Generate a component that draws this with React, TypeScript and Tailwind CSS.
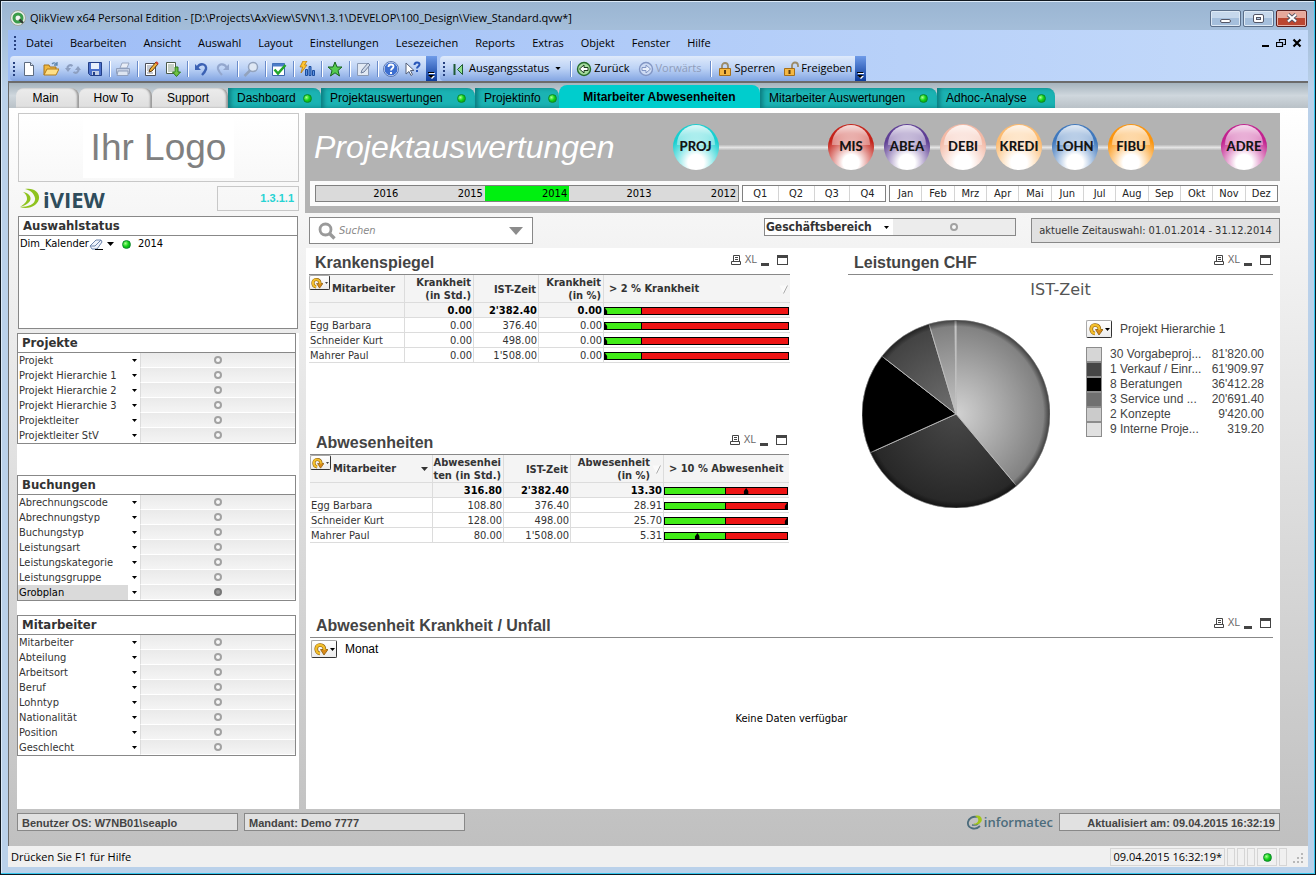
import React from 'react';
import clsx from 'clsx';

const segoe = "font-[family-name:'Open_Sans','Noto_Sans',sans-serif]";
const tahoma = "font-[family-name:'DejaVu_Sans_Condensed','DejaVu_Sans',sans-serif]";
const verdana = "font-[family-name:'DejaVu_Sans',Verdana,sans-serif]";
const arial = "font-[family-name:'Liberation_Sans',Arial,sans-serif]";
const lato = "font-[family-name:Lato,sans-serif]";

const menus = [
  'Datei', 'Bearbeiten', 'Ansicht', 'Auswahl', 'Layout', 'Einstellungen',
  'Lesezeichen', 'Reports', 'Extras', 'Objekt', 'Fenster', 'Hilfe',
];

const tabs = [
  { label: 'Main', size: 'w-[63px]', kind: 'plain' },
  { label: 'How To', size: 'w-[73px]', kind: 'plain' },
  { label: 'Support', size: 'w-[76px]', kind: 'plain' },
  { label: 'Dashboard', size: 'w-[93px] px-[9px]', kind: 'teal' },
  { label: 'Projektauswertungen', size: 'w-[154px] px-[9px]', kind: 'teal' },
  { label: 'Projektinfo', size: 'w-[84px] pr-[2px] pl-[9px]', kind: 'teal' },
  { label: 'Mitarbeiter Abwesenheiten', size: 'w-[201px]', kind: 'active' },
  { label: 'Mitarbeiter Auswertungen', size: 'w-[177px] px-[9px]', kind: 'teal' },
  { label: 'Adhoc-Analyse', size: 'w-[118px] px-[9px]', kind: 'teal' },
];

const filterBoxes = [
  {
    title: 'Projekte',
    space: 'mb-[31px]',
    fields: ['Projekt', 'Projekt Hierarchie 1', 'Projekt Hierarchie 2', 'Projekt Hierarchie 3', 'Projektleiter', 'Projektleiter StV'],
  },
  {
    title: 'Buchungen',
    space: 'mb-[14px]',
    fields: ['Abrechnungscode', 'Abrechnungstyp', 'Buchungstyp', 'Leistungsart', 'Leistungskategorie', 'Leistungsgruppe', 'Grobplan'],
  },
  {
    title: 'Mitarbeiter',
    space: '',
    fields: ['Mitarbeiter', 'Abteilung', 'Arbeitsort', 'Beruf', 'Lohntyp', 'Nationalität', 'Position', 'Geschlecht'],
  },
];

const years = ['2016', '2015', '2014', '2013', '2012'];
const quarters = ['Q1', 'Q2', 'Q3', 'Q4'];
const months = ['Jan', 'Feb', 'Mrz', 'Apr', 'Mai', 'Jun', 'Jul', 'Aug', 'Sep', 'Okt', 'Nov', 'Dez'];

const modules = [
  { label: 'PROJ', color: '#18cfd0', line: 'flex-1' },
  { label: 'MIS', color: '#c4231a', line: 'w-[10px]' },
  { label: 'ABEA', color: '#5f3f95', line: 'w-[10px]' },
  { label: 'DEBI', color: '#f3b9a6', line: 'w-[10px]' },
  { label: 'KREDI', color: '#fcbb70', line: 'w-[10px]' },
  { label: 'LOHN', color: '#3f78bd', line: 'w-[10px]' },
  { label: 'FIBU', color: '#fb950f', line: 'w-[67px]' },
  { label: 'ADRE', color: '#c2228f', line: '' },
];

type Row = { name: string; hours: string; actual: string; percent: string; value: number };

const sickRows: Row[] = [
  { name: '', hours: '0.00', actual: "2'382.40", percent: '0.00', value: 0 },
  { name: 'Egg Barbara', hours: '0.00', actual: '376.40', percent: '0.00', value: 0 },
  { name: 'Schneider Kurt', hours: '0.00', actual: '498.00', percent: '0.00', value: 0 },
  { name: 'Mahrer Paul', hours: '0.00', actual: "1'508.00", percent: '0.00', value: 0 },
];

const absenceRows: Row[] = [
  { name: '', hours: '316.80', actual: "2'382.40", percent: '13.30', value: 13.3 },
  { name: 'Egg Barbara', hours: '108.80', actual: '376.40', percent: '28.91', value: 28.91 },
  { name: 'Schneider Kurt', hours: '128.00', actual: '498.00', percent: '25.70', value: 25.7 },
  { name: 'Mahrer Paul', hours: '80.00', actual: "1'508.00", percent: '5.31', value: 5.31 },
];

const services = [
  { label: '30 Vorgabeproj...', text: "81'820.00", value: 81820, swatch: '#d6d6d6', from: '#d2d2d2', to: '#7c7c7c' },
  { label: '1 Verkauf / Einr...', text: "61'909.97", value: 61909.97, swatch: '#464646', from: '#484848', to: '#262626' },
  { label: '8 Beratungen', text: "36'412.28", value: 36412.28, swatch: '#000000', from: '#000000', to: '#000000' },
  { label: '3 Service und ...', text: "20'691.40", value: 20691.4, swatch: '#707070', from: '#707070', to: '#404040' },
  { label: '2 Konzepte', text: "9'420.00", value: 9420, swatch: '#cbcbcb', from: '#c4c4c4', to: '#7a7a7a' },
  { label: '9 Interne Proje...', text: '319.20', value: 319.2, swatch: '#e0e0e0', from: '#e8e8e8', to: '#dddddd' },
];

function Led({ className }: { className?: string }) {
  return (
    <span
      className={clsx(
        'inline-block size-[9px] shrink-0 rounded-full border border-[#0a8a2a] bg-[radial-gradient(circle_at_35%_35%,#a8ff90,#16d51c_45%,#068a10)]',
        className,
      )}
    />
  );
}

function Caret({ className }: { className?: string }) {
  return (
    <svg viewBox="0 0 7 4" className={clsx('shrink-0', className ?? 'h-[3px] w-[5px]')} aria-hidden="true">
      <path d="M0 0h7L3.5 4z" fill="currentColor" />
    </svg>
  );
}

function Ring({ filled }: { filled?: boolean }) {
  return (
    <span
      className={clsx(
        'size-2 rounded-full border-2',
        filled ? 'border-[#777] bg-[#9a9a9a]' : 'border-[#a2a2a2] bg-[#f8f8f8]',
      )}
    />
  );
}

function ToolIcon({ children }: { children: React.ReactNode }) {
  return (
    <svg viewBox="0 0 16 16" className="size-4 shrink-0" aria-hidden="true">
      {children}
    </svg>
  );
}

function ToolButton({ label, children }: { label: string; children: React.ReactNode }) {
  return (
    <button type="button" aria-label={label} className="flex w-[22px] items-center justify-center">
      <ToolIcon>{children}</ToolIcon>
    </button>
  );
}

function Separator() {
  return (
    <span className="flex w-[6px] justify-center">
      <span className="h-4 w-px bg-[#6a8ccb] shadow-[1px_0_0_#fff]" />
    </span>
  );
}

function Grip() {
  return (
    <span className="mx-[3px] flex flex-col gap-[2px]">
      <span className="size-[2px] bg-[#27417f]" />
      <span className="size-[2px] bg-[#27417f]" />
      <span className="size-[2px] bg-[#27417f]" />
      <span className="size-[2px] bg-[#27417f]" />
    </span>
  );
}

function ToolbarEnd() {
  return (
    <button
      type="button"
      aria-label="Symbolleistenoptionen"
      className="ml-auto flex w-[11px] items-end justify-center self-stretch bg-linear-to-b from-[#6f9be8] to-[#0b3a9c] pb-[2px]"
    >
      <svg viewBox="0 0 7 7" className="size-[7px]" aria-hidden="true">
        <path d="M1 1h6v1H1zM1 4h6l-3 3z" fill="#fff" />
        <path d="M0 0h6v1H0zM0 3h6L3 6z" fill="#000" />
      </svg>
    </button>
  );
}

function TitleBar() {
  return (
    <header className={clsx('flex h-7 items-center pt-1 pl-[2px]', segoe)}>
      <svg viewBox="0 0 16 16" className="size-4" aria-hidden="true">
        <circle cx="8" cy="8" r="7.5" fill="#e9eee9" stroke="#9fa8a0" />
        <circle cx="8" cy="8" r="4" fill="none" stroke="#3a9c49" strokeWidth="3" />
        <path d="M8 8l5 5" stroke="#2d3b33" strokeWidth="2.4" />
        <circle cx="8" cy="8" r="2" fill="#f3f7f3" />
      </svg>
      <h1 className="ml-[4px] text-[11px] text-black">
        QlikView x64 Personal Edition - [D:\Projects\AxView\SVN\1.3.1\DEVELOP\100_Design\View_Standard.qvw*]
      </h1>
      <div className="ml-auto flex gap-[2px] pr-px">
        <button type="button" aria-label="Minimieren" className="flex h-[17px] w-[31px] items-center justify-center rounded-xs border border-[#5b6f8a] bg-linear-to-b from-[#c6d8ec] from-50% to-[#a5bfdc] to-50% shadow-[inset_0_0_0_1px_#dde9f5]">
          <span className="mt-[5px] h-[4px] w-[11px] rounded-xs border border-[#535666] bg-white" />
        </button>
        <button type="button" aria-label="Maximieren" className="flex h-[17px] w-[31px] items-center justify-center rounded-xs border border-[#5b6f8a] bg-linear-to-b from-[#c6d8ec] from-50% to-[#a5bfdc] to-50% shadow-[inset_0_0_0_1px_#dde9f5]">
          <span className="flex h-[9px] w-[11px] items-center justify-center rounded-xs border border-[#535666] bg-white">
            <span className="h-[3px] w-[5px] border border-[#535666] bg-[#b4cbe4]" />
          </span>
        </button>
        <button type="button" aria-label="Schliessen" className="flex h-[17px] w-[31px] items-center justify-center rounded-xs border border-[#5a1f1f] bg-linear-to-b from-[#e6a89b] from-50% to-[#bb4630] to-50% shadow-[inset_0_0_0_1px_#e8b3a8]">
          <svg viewBox="0 0 12 10" className="h-[10px] w-3" aria-hidden="true">
            <path d="M2 1.5l8 7M10 1.5l-8 7" stroke="#535666" strokeWidth="4" />
            <path d="M2 1.5l8 7M10 1.5l-8 7" stroke="#fff" strokeWidth="2.2" />
          </svg>
        </button>
      </div>
    </header>
  );
}

function MenuBar() {
  return (
    <nav className={clsx('flex h-[26px] items-center pl-[3px] text-[11px] text-black', segoe)}>
      <Grip />
      <div className="ml-[7px] flex gap-[17px]">
        {menus.map((menu) => (
          <button type="button" key={menu}>{menu}</button>
        ))}
      </div>
      <div className="ml-auto flex items-center gap-[6px] pr-[6px]">
        <button type="button" aria-label="Fenster minimieren">
          <svg viewBox="0 0 10 10" className="size-[10px]" aria-hidden="true"><path d="M2 7h7v2H2z" /></svg>
        </button>
        <button type="button" aria-label="Fenster wiederherstellen">
          <svg viewBox="0 0 10 10" className="size-[10px]" aria-hidden="true">
            <path d="M3.5 3.5v-2h6v5h-2M.5 4.5h6v4h-6zM3 1.5h7M0 4.5h7" fill="none" stroke="#000" strokeWidth="1.2" />
          </svg>
        </button>
        <button type="button" aria-label="Fenster schliessen">
          <svg viewBox="0 0 10 10" className="size-[10px]" aria-hidden="true"><path d="M1.5 1.5l7 7M8.5 1.5l-7 7" stroke="#000" strokeWidth="2.2" /></svg>
        </button>
      </div>
    </nav>
  );
}

function Toolbars() {
  return (
    <div className={clsx('flex h-[25px] gap-[3px] pl-[2px] text-[11px] text-black', segoe)}>
      <div className="flex w-[427px] items-center rounded-l-sm bg-linear-to-b from-[#dfeafb] via-[#bcd2f5] to-[#83a5e2]">
        <Grip />
        <ToolButton label="Neu">
          <path d="M3.5 1.5h6l3 3v10h-9z" fill="#fff" stroke="#5d6b80" />
          <path d="M9.5 1.5v3h3" fill="#d9e2ee" stroke="#5d6b80" />
        </ToolButton>
        <ToolButton label="Öffnen">
          <path d="M1 14V4h5l1 2h6v3" fill="#f0b840" stroke="#a8741a" />
          <path d="M1 14l3-6h12l-3 6z" fill="#ffdf86" stroke="#b27c1c" />
          <path d="M9 3c2-2 4-1 5 1m0-3v3h-3" fill="none" stroke="#5e86ad" strokeWidth="1.3" />
        </ToolButton>
        <ToolButton label="Neu laden">
          <path d="M2.500 8C2 5 5 3 7.500 5M13.500 8c.5 3-2.500 5-5 3" fill="none" stroke="#8d9fc0" strokeWidth="2.200" />
          <path d="M0 7h6L3 11zM10 9h6l-3-4z" fill="#8d9fc0" />
        </ToolButton>
        <ToolButton label="Speichern">
          <path d="M1.5 1.5h13v13h-11l-2-2z" fill="#4a6fc9" stroke="#233f87" />
          <path d="M4 2h8v6H4z" fill="#e9f0fc" />
          <path d="M5 10h7v4H5z" fill="#c3cfe6" />
          <path d="M6 11h2v3H6z" fill="#233f87" />
        </ToolButton>
        <Separator />
        <ToolButton label="Drucken">
          <path d="M5 7l2-5h7l-2 5z" fill="#e8edf6" stroke="#9aa8c2" />
          <path d="M1.5 7.5h13v5h-13z" fill="#c3cee2" stroke="#8f9fbd" />
          <path d="M3 10h10v4.5H2z" fill="#dde5f1" stroke="#8f9fbd" />
        </ToolButton>
        <Separator />
        <ToolButton label="Skript bearbeiten">
          <path d="M2.5 2.5h10v12h-10z" fill="#fff" stroke="#4b4f58" />
          <path d="M4 5h5M4 7h4M4 9h3M4 12h6" stroke="#8b95a8" />
          <path d="M6 11l1-3 6-7 2 2-6 7z" fill="#f1b23a" stroke="#5d3c12" />
          <path d="M13 1l2 2" stroke="#d04030" strokeWidth="2" />
        </ToolButton>
        <ToolButton label="Tabellen anzeigen">
          <path d="M1.5 1.5h9v11h-9z" fill="#fff" stroke="#4b5b4b" />
          <path d="M3 4h6M3 6h6M3 8h6M3 10h6" stroke="#8aa08a" />
          <path d="M10 6h3v5h2.5l-4 4.5L7.5 11H10z" fill="#6fc241" stroke="#2d7a1c" />
        </ToolButton>
        <Separator />
        <ToolButton label="Rückgängig">
          <path d="M4 7c3-6 10-4 9 1-1 3-2 4-4 6" fill="none" stroke="#3c62b4" strokeWidth="2.4" />
          <path d="M2 3v6h6z" fill="#3c62b4" />
        </ToolButton>
        <ToolButton label="Wiederholen">
          <path d="M12 7C9 1 2 3 3 8c1 3 2 4 4 6" fill="none" stroke="#93a7ce" strokeWidth="2.2" />
          <path d="M14 3v6H8z" fill="#93a7ce" />
        </ToolButton>
        <Separator />
        <ToolButton label="Suchen">
          <circle cx="10" cy="6" r="4.5" fill="#dfe8f4" stroke="#93a3bd" strokeWidth="1.5" />
          <path d="M7 9.5L1.500 15" stroke="#93a3bd" strokeWidth="2.5" />
        </ToolButton>
        <Separator />
        <ToolButton label="Aktuelle Auswahl">
          <path d="M1.5 2.5h12v12h-12z" fill="#fff" stroke="#3b66ad" />
          <path d="M1.5 2.5h12v3h-12z" fill="#4b7cc8" />
          <path d="M3.5 8.5l3.500 4L14.500 4" fill="none" stroke="#22a52a" strokeWidth="2.5" />
        </ToolButton>
        <Separator />
        <ToolButton label="Diagramm erstellen">
          <path d="M6.5 8.5h2v6h-2zM10 5.500h2v9h-2zM13.500 9.500h2v5h-2z" fill="#5b93e3" stroke="#1c4c9d" />
          <path d="M4 0h4L5.500 4H8l-6 8 1.500-6H1z" fill="#ffc52e" stroke="#b57810" strokeWidth=".8" />
        </ToolButton>
        <Separator />
        <ToolButton label="Lesezeichen hinzufügen">
          <path d="M8 1l2 5h5l-4 3.500 1.500 5.500L8 11.800 3.500 15 5 9.500 1 6h5z" fill="#55cc4f" stroke="#17641c" />
        </ToolButton>
        <Separator />
        <ToolButton label="Notizen">
          <path d="M2.500 2.500h11v12h-11z" fill="#e2e9f3" stroke="#8b9ab4" />
          <path d="M6 12l1-3 6-7 2 2-6 7z" fill="#cfd9e8" stroke="#6f7f9d" />
        </ToolButton>
        <Separator />
        <ToolButton label="Hilfe">
          <circle cx="8" cy="8" r="7" fill="#3d6fd0" stroke="#e6eefb" />
          <circle cx="8" cy="8" r="7.500" fill="none" stroke="#2d5098" strokeWidth=".7" />
          <path d="M5.500 6c0-3.500 5-3 5-.5 0 2-2.500 2-2.500 4" fill="none" stroke="#fff" strokeWidth="1.800" />
          <path d="M7 11h2v2H7z" fill="#fff" />
        </ToolButton>
        <ToolButton label="Direkthilfe">
          <path d="M1 2v11l3-2.500 2 4 1.500-1-2-4H9z" fill="#fff" stroke="#55617a" />
          <path d="M9.500 4c0-3.500 5-3 5-.5 0 2-2.500 2-2.500 4" fill="none" stroke="#2a57b8" strokeWidth="2" />
          <path d="M11 9h2v2h-2z" fill="#2a57b8" />
        </ToolButton>
        <ToolbarEnd />
      </div>
      <div className="flex w-[426px] items-center rounded-l-sm bg-linear-to-b from-[#dfeafb] via-[#bcd2f5] to-[#83a5e2]">
        <Grip />
        <button type="button" className="flex items-center gap-[2px] pl-[3px]">
          <ToolIcon>
            <path d="M3.500 3v11" stroke="#1f5a35" strokeWidth="2" />
            <path d="M6.500 8.500l5-5v10z" fill="#8ee08a" stroke="#1f5a35" />
          </ToolIcon>
          Ausgangsstatus
          <Caret className="ml-1 h-[3px] w-[6px]" />
        </button>
        <span className="w-[6px]" />
        <Separator />
        <button type="button" className="flex items-center gap-[2px] pl-[3px]">
          <ToolIcon>
            <circle cx="8" cy="8" r="6.500" fill="#a5dc9e" stroke="#256b2b" strokeWidth="1.400" />
            <path d="M3.500 8L8 4v2.500h4v3H8V12z" fill="#fff" stroke="#1d3c20" />
          </ToolIcon>
          Zurück
        </button>
        <button type="button" className="ml-2 flex items-center gap-[2px] text-[#8f9cba]">
          <ToolIcon>
            <circle cx="8" cy="8" r="6.500" fill="#cddbf4" stroke="#8296c4" strokeWidth="1.400" />
            <path d="M12.500 8L8 4v2.500H4v3h4V12z" fill="#e8effb" stroke="#8296c4" />
          </ToolIcon>
          Vorwärts
        </button>
        <span className="w-[6px]" />
        <Separator />
        <button type="button" className="flex items-center gap-[2px] pl-[3px]">
          <ToolIcon>
            <path d="M5 8V5a3 3 0 0 1 6 0v3" fill="none" stroke="#9b8c6a" strokeWidth="1.800" />
            <path d="M2.500 7.500h11v7h-11z" fill="#f5b843" stroke="#a6701a" />
            <path d="M7 9h2v4H7z" fill="#5e3c0d" />
          </ToolIcon>
          Sperren
        </button>
        <button type="button" className="ml-2 flex items-center gap-[2px]">
          <ToolIcon>
            <path d="M9 8V4.500a3 3 0 0 1 6 0V6" fill="none" stroke="#9b8c6a" strokeWidth="1.800" />
            <path d="M1.500 7.500h10v7h-10z" fill="#f5b843" stroke="#a6701a" />
            <path d="M5.500 9h2v4h-2z" fill="#5e3c0d" />
          </ToolIcon>
          Freigeben
        </button>
        <ToolbarEnd />
      </div>
    </div>
  );
}

function SheetTabs() {
  return (
    <div role="tablist" className={clsx('flex h-[25px] items-end bg-linear-to-b from-[#a5b3bd] via-[#cfd7dd] to-[#b9c1c7] pl-[7px] text-xs text-black', arial)}>
      {tabs.map((tab) => (
        <button
          type="button"
          role="tab"
          aria-selected={tab.kind === 'active'}
          key={tab.label}
          className={clsx(
            'flex items-center whitespace-nowrap',
            tab.size,
            tab.kind === 'plain' && 'h-5 justify-center rounded-t-lg bg-linear-to-b from-[#ececec] to-[#dedede] pr-1 shadow-[inset_-2px_0_2px_#9a9a9a]',
            tab.kind === 'teal' && 'h-5 justify-between rounded-tr-lg bg-[#1bb3b3] shadow-[inset_3px_0_4px_#0c7c80]',
            tab.kind === 'active' && 'h-[23px] justify-center rounded-t-lg bg-[#00cdcd] font-bold',
          )}
        >
          {tab.label}
          {tab.kind === 'teal' && <Led />}
        </button>
      ))}
    </div>
  );
}

function FilterBox({ title, fields, space }: { title: string; fields: string[]; space: string }) {
  return (
    <section className={clsx('mr-[3px] border border-[#888] bg-white', space)}>
      <h2 className="h-[19px] border-b border-[#888] pl-1 text-[13px] leading-[18px] font-bold text-[#333]">{title}</h2>
      {fields.map((field) => (
        <button type="button" key={field} aria-haspopup="listbox" className="flex h-[15px] w-full items-stretch text-left text-[11px] leading-4 text-[#333]">
          <span className={clsx('w-[110px] whitespace-nowrap pl-px', field === 'Grobplan' && 'bg-[#dadada] text-black')}>{field}</span>
          <span className="flex w-[12px] items-center justify-center text-black"><Caret /></span>
          <span className="flex flex-1 items-center justify-center border-b border-l border-b-white border-l-[#dcdcdc] bg-linear-to-b from-[#eaeaea] to-[#f4f4f4]">
            <Ring filled={field === 'Grobplan'} />
          </span>
        </button>
      ))}
    </section>
  );
}

function Sidebar() {
  return (
    <aside className={clsx('flex w-[282px] shrink-0 flex-col', tahoma)}>
      <div className="ml-px flex h-[69px] items-center justify-center border border-[#c8c8c8] bg-linear-to-b from-white to-[#f8f8f8]">
        <span className={clsx('bg-white px-2 text-[37px] leading-[60px] text-[#808080]', arial)}>Ihr Logo</span>
      </div>
      <div className="mt-1 flex h-[25px] items-center justify-between">
        <div className="flex items-center gap-[2px] pl-[2px]">
          <svg viewBox="0 0 22 22" className="size-[22px]" aria-hidden="true">
            <path d="M6 1c14-2 18 10 10 16-4 3-10 4-15 2 9 0 16-3 15-9-1-5-5-8-10-9z" fill="#8fc31f" />
            <path d="M4 4c6 1 9 5 7 9-2 3-6 5-10 6 4-3 7-5 7-8S7 6 4 4z" fill="#8fc31f" />
          </svg>
          <span className={clsx('text-[22px] leading-6 font-bold text-[#2f4d5c]', segoe)}>iVIEW</span>
        </div>
        <div className={clsx('h-[25px] w-[82px] border border-[#c8c8c8] pr-1 text-right text-[11px] leading-[23px] font-bold text-[#26d3d3]', arial)}>1.3.1.1</div>
      </div>
      <section className="mt-[5px] mr-px ml-px h-[113px] border border-[#888] bg-white">
        <h2 className="h-[19px] border-b border-[#888] pl-1 text-[13px] leading-[18px] font-bold text-[#333]">Auswahlstatus</h2>
        <div className="flex h-4 items-center pl-px text-[11px] text-black">
          Dim_Kalender
          <svg viewBox="0 0 14 12" className="h-3 w-[14px]" aria-hidden="true">
            <path d="M1 8l6-6h5l1 2-5 7H3z" fill="#eef2fa" stroke="#6f86ad" />
            <path d="M1 8h5l6-6" fill="none" stroke="#6f86ad" />
            <path d="M6 11.500h8" stroke="#000" />
          </svg>
          <Caret className="ml-1 h-1 w-[7px]" />
          <Led className="mr-[7px] ml-2" />
          2014
        </div>
      </section>
      <div className="mt-1 flex-1 bg-white">
        {filterBoxes.map((box) => (
          <FilterBox key={box.title} {...box} />
        ))}
      </div>
    </aside>
  );
}

function ModuleNav() {
  return (
    <nav className="ml-[58px] flex flex-1 items-center">
      {modules.map((module) => (
        <React.Fragment key={module.label}>
          <button
            type="button"
            className={clsx('relative size-[46px] shrink-0 overflow-hidden rounded-full text-[13px] font-black text-[#151515]', lato)}
            style={{ background: `radial-gradient(circle at 50% 84%, #fff 18%, ${module.color} 66%)` }}
          >
            <span className="absolute inset-x-[4px] top-[1px] h-5 rounded-t-full bg-linear-to-b from-white/85 to-white/35" />
            <span className="relative flex justify-center">{module.label}</span>
          </button>
          {module.line && <span className={clsx('h-[5px] bg-linear-to-b from-[#bdbdbd] via-[#e4e4e4] to-[#bdbdbd]', module.line)} />}
        </React.Fragment>
      ))}
    </nav>
  );
}

function PeriodBar() {
  return (
    <div className="ml-[5px] flex h-[25px] items-center gap-[3px] bg-[#fbfbfb] pr-[2px] pl-[5px] text-[11px] leading-[15px] text-[#222]">
      <div className="flex h-[17px] w-[424px] border border-[#808080] bg-[#dadada] text-black">
        {years.map((year) => (
          <button type="button" key={year} className={clsx('flex-1 pr-[2px] text-right', year === '2014' && 'bg-[#00f010]')}>{year}</button>
        ))}
      </div>
      <div className="flex h-[17px] w-[144px] divide-x divide-[#d4d4d4] border border-[#808080] bg-white">
        {quarters.map((quarter) => (
          <button type="button" key={quarter} className="flex-1">{quarter}</button>
        ))}
      </div>
      <div className="flex h-[17px] flex-1 divide-x divide-[#d4d4d4] border border-[#808080] bg-white">
        {months.map((month) => (
          <button type="button" key={month} className="w-0 flex-1">{month}</button>
        ))}
      </div>
    </div>
  );
}

function SelectionRow() {
  return (
    <div className="flex h-[35px] items-start pt-1 pl-1">
      <label className="flex h-[27px] w-[224px] items-center border border-[#888] bg-white pl-2">
        <svg viewBox="0 0 18 18" className="size-[18px]" aria-hidden="true">
          <circle cx="7.500" cy="7.500" r="5.500" fill="none" stroke="#9a9a9a" strokeWidth="2.800" />
          <path d="M11.500 11.500l5 5" stroke="#9a9a9a" strokeWidth="3.400" />
        </svg>
        <input type="text" aria-label="Suchen" placeholder="Suchen" className="ml-[3px] h-5 w-0 flex-1 text-[11px] italic outline-none placeholder:text-[#888]" />
        <Caret className="mr-[8px] h-2 w-4 text-[#8c8c8c]" />
      </label>
      <button type="button" aria-haspopup="listbox" className="mt-px ml-auto flex h-[18px] w-[252px] items-stretch border border-[#888] text-left text-xs leading-4 font-bold text-[#333]">
        <span className="w-[112px] bg-white pl-px">Geschäftsbereich</span>
        <span className="flex w-[16px] items-center justify-start bg-white pl-[7px] text-black"><Caret /></span>
        <span className="flex flex-1 items-center justify-center bg-[#ececec]"><Ring /></span>
      </button>
      <div className="mt-px ml-[15px] h-[25px] w-[249px] border border-[#888] bg-[#e1e1e1] text-center text-[11px] leading-[23px] whitespace-nowrap text-[#333]">
        aktuelle Zeitauswahl: 01.01.2014 - 31.12.2014
      </div>
    </div>
  );
}

function Caption({ title }: { title: string }) {
  return (
    <div className="flex h-6 items-center justify-between border-b border-[#888] pr-[2px] pl-[6px] text-[#444]">
      <h2 className={clsx('text-base font-bold', arial)}>{title}</h2>
      <div className="mb-[6px] flex items-center gap-1">
        <button type="button" aria-label="Drucken">
          <svg viewBox="0 0 10 10" className="size-[10px]" aria-hidden="true">
            <path d="M2.500 6.500v-6h6v6M.5 6.500h9v3h-9zM4 2.500h3M4 4.500h3" fill="none" stroke="#444" />
          </svg>
        </button>
        <button type="button" className={clsx('text-[10px] leading-[10px] text-[#666]', arial)}>XL</button>
        <button type="button" aria-label="Minimieren" className="flex h-3 w-2 items-end"><span className="h-[3px] w-full bg-[#444]" /></button>
        <button type="button" aria-label="Maximieren" className="ml-1 h-[10px] w-[11px] border border-t-[3px] border-[#444]" />
      </div>
    </div>
  );
}

function CycleButton({ small }: { small?: boolean }) {
  return (
    <button
      type="button"
      aria-label="Dimension wechseln"
      className={clsx(
        'flex items-center justify-center gap-[2px] rounded-xs border border-[#aaa] border-r-[#333] border-b-[#333] bg-linear-to-b from-white to-[#ececec] text-black',
        small ? 'h-[15px] w-[21px]' : 'h-[18px] w-[26px]',
      )}
    >
      <svg viewBox="0 0 14 14" className={small ? 'size-3' : 'size-[14px]'} aria-hidden="true">
        <path d="M6 11.500C1 11 1 3 6 3c3 0 4.500 2 4.500 5" fill="none" stroke="#8a5a08" strokeWidth="3.600" />
        <path d="M6.500 7.500H14L10 13z" fill="#d98a18" stroke="#8a5a08" strokeWidth=".8" />
        <path d="M6 11.500C1 11 1 3 6 3c3 0 4.500 2 4.500 5" fill="none" stroke="#f3bf2c" strokeWidth="2.400" />
      </svg>
      <Caret className={small ? 'h-[2px] w-[3px]' : 'h-[3px] w-[5px]'} />
    </button>
  );
}

function Gauge({ value, limit, max }: { value: number; limit: number; max: number }) {
  return (
    <div className="relative mr-px h-2 overflow-hidden border border-black bg-[#ee1414]">
      <div className="h-full border-r border-black bg-[#41ec17]" style={{ width: `${(limit / max) * 100}%` }} />
      <span
        className="absolute bottom-0 h-[6px] w-[5px] -translate-x-1/2 bg-black [clip-path:polygon(50%_0,100%_60%,100%_100%,0_100%,0_60%)]"
        style={{ left: `${Math.min(100, (value / max) * 100)}%` }}
      />
    </div>
  );
}

type GaugeTableProps = {
  rows: Row[];
  heads: React.ReactNode[];
  widths: string[];
  limit: number;
  max: number;
  sortable?: boolean;
};

function GaugeTable({ rows, heads, widths, limit, max, sortable }: GaugeTableProps) {
  return (
    <table className="w-full table-fixed border-separate border-spacing-0 text-[11px] text-[#333]">
      <colgroup>
        {widths.map((width, i) => <col key={i} className={width} />)}
      </colgroup>
      <thead>
        <tr className="h-7 bg-[#f4f4f4]">
          <th scope="col" className="border-r border-b border-[#dcdcdc] p-0 text-left">
            <div className="flex h-[27px] items-center">
              <div className="self-start"><CycleButton small /></div>
              <span className="mt-[2px] ml-[2px]">{heads[0]}</span>
              {sortable && <Caret className="mr-1 ml-auto h-1 w-[7px]" />}
            </div>
          </th>
          {heads.slice(1, 4).map((head, i) => (
            <th key={i} scope="col" className="border-r border-b border-[#dcdcdc] p-0 pt-px pr-[2px] text-right leading-[13px] whitespace-nowrap">{head}</th>
          ))}
          <th scope="col" className="border-b border-[#dcdcdc] p-0 pt-[2px] pl-[5px] text-left whitespace-nowrap">{heads[4]}</th>
        </tr>
      </thead>
      <tbody>
        {rows.map((row, i) => (
          <tr key={row.name} className={clsx('h-[15px] leading-[13px]', i === 0 && 'bg-[#f4f4f4] font-bold text-black')}>
            <td className="border-r border-b border-[#dcdcdc] p-0 pt-px pl-px">{row.name}</td>
            <td className="border-r border-b border-[#dcdcdc] p-0 pt-px pr-px text-right">{row.hours}</td>
            <td className="border-r border-b border-[#dcdcdc] p-0 pt-px pr-px text-right">{row.actual}</td>
            <td className="border-r border-b border-[#dcdcdc] p-0 pt-px pr-px text-right">{row.percent}</td>
            <td className="border-b border-[#dcdcdc] p-0 pt-[2px]"><Gauge value={row.value} limit={limit} max={max} /></td>
          </tr>
        ))}
      </tbody>
    </table>
  );
}

function SortMark() {
  return (
    <svg viewBox="0 0 9 9" className="size-[9px] shrink-0" aria-hidden="true">
      <path d="M.5 .5h8l-4 8z" fill="#fafafa" />
      <path d="M8.500 .5l-4 8" stroke="#aaa" />
    </svg>
  );
}

function PieChart() {
  const total = services.reduce((sum, s) => sum + s.value, 0);
  let start = 0;
  const slices = services.map((s) => {
    const end = start + (s.value / total) * Math.PI * 2;
    const large = end - start > Math.PI ? 1 : 0;
    const d = `M94 94L${94 + 94 * Math.sin(start)} ${94 - 94 * Math.cos(start)}A94 94 0 ${large} 1 ${94 + 94 * Math.sin(end)} ${94 - 94 * Math.cos(end)}Z`;
    start = end;
    return { ...s, d };
  });
  return (
    <svg viewBox="0 0 188 188" className="size-[188px] shrink-0" role="img" aria-label="IST-Zeit nach Projekt Hierarchie 1">
      <defs>
        {slices.map((s, i) => (
          <radialGradient key={s.label} id={`slice-${i}`} gradientUnits="userSpaceOnUse" cx="94" cy="94" r="94">
            <stop offset="0" stopColor={s.from} />
            <stop offset="1" stopColor={s.to} />
          </radialGradient>
        ))}
        <radialGradient id="rim">
          <stop offset=".93" stopColor="#000" stopOpacity="0" />
          <stop offset="1" stopColor="#000" stopOpacity=".5" />
        </radialGradient>
      </defs>
      {slices.map((s, i) => (
        <path key={s.label} d={s.d} fill={`url(#slice-${i})`} stroke="#bdbdbd" strokeWidth=".9" />
      ))}
      <circle cx="94" cy="94" r="94" fill="url(#rim)" />
    </svg>
  );
}

function ServicesChart() {
  return (
    <section className="w-[425px]">
      <Caption title="Leistungen CHF" />
      <h3 className={clsx('mt-1 text-center text-base leading-[21px] text-[#555]', verdana)}>IST-Zeit</h3>
      <div className={clsx('flex pt-5 pl-[14px] text-xs text-[#444]', arial)}>
        <PieChart />
        <div className="ml-9 flex-1 pr-[9px]">
          <div className="flex h-[18px] items-center gap-2">
            <CycleButton />
            Projekt Hierarchie 1
          </div>
          <table className="mt-[9px] w-full border-separate border-spacing-0">
            <tbody>
              {services.map((s) => (
                <tr key={s.label} className="h-[15px] leading-[15px]">
                  <td className="w-[16px] border border-[#8c8c8c] p-0" style={{ backgroundColor: s.swatch }} />
                  <td className="p-0 pl-2 whitespace-nowrap">{s.label}</td>
                  <td className="p-0 text-right whitespace-nowrap">{s.text}</td>
                </tr>
              ))}
            </tbody>
          </table>
        </div>
      </div>
    </section>
  );
}

function Dashboard() {
  return (
    <main className={clsx('flex min-w-0 flex-1 flex-col', tahoma)}>
      <div className="flex h-[100px] flex-col bg-[#b3b3b3]">
        <div className="flex h-[68px] items-center pr-[13px] pl-[9px]">
          <h2 className={clsx('text-[32px] leading-10 text-white italic', arial)}>Projektauswertungen</h2>
          <ModuleNav />
        </div>
        <PeriodBar />
      </div>
      <SelectionRow />
      <div className="ml-px flex-1 bg-white pt-[3px] pr-[7px] pl-[3px]">
        <div className="flex justify-between">
          <div className="w-[481px]">
            <section className="min-h-[180px]">
              <Caption title="Krankenspiegel" />
              <GaugeTable
                rows={sickRows}
                limit={2}
                max={10}
                widths={['w-[96px]', 'w-[69px]', 'w-[65px]', 'w-[65px]', 'w-auto']}
                heads={[
                  'Mitarbeiter',
                  <>Krankheit<br />(in Std.)</>,
                  'IST-Zeit',
                  <>Krankheit<br />(in %)</>,
                  <span className="flex items-center justify-between pr-[2px]">&gt; 2 % Krankheit<SortMark /></span>,
                ]}
              />
            </section>
            <section className="min-h-[183px] px-px">
              <Caption title="Abwesenheiten" />
              <GaugeTable
                rows={absenceRows}
                limit={10}
                max={20}
                sortable
                widths={['w-[123px]', 'w-[71px]', 'w-[67px]', 'w-[93px]', 'w-auto']}
                heads={[
                  'Mitarbeiter',
                  <>Abwesenhei<br />ten (in Std.)</>,
                  'IST-Zeit',
                  <span className="flex items-center justify-end gap-[2px]"><span>Abwesenheit<br />(in %)</span><SortMark /></span>,
                  '> 10 % Abwesenheit',
                ]}
              />
            </section>
          </div>
          <ServicesChart />
        </div>
        <section className="pl-px">
          <Caption title="Abwesenheit Krankheit / Unfall" />
          <div className={clsx('flex items-center gap-2 pt-[2px] pl-px text-xs text-black', arial)}>
            <CycleButton />
            Monat
          </div>
          <p className="pt-[53px] text-center text-[11px] leading-4 text-black">Keine Daten verfügbar</p>
        </section>
      </div>
    </main>
  );
}

function SheetFooter() {
  return (
    <footer className={clsx('flex items-center pt-1 pr-7 pl-2 text-[11px] leading-[18px] font-bold text-[#444]', arial)}>
      <div className="h-[18px] w-[221px] border border-[#888] bg-[#e1e1e1] pl-1">Benutzer OS: W7NB01\seaplo</div>
      <div className="ml-[6px] h-[18px] w-[221px] border border-[#888] bg-[#e1e1e1] pl-1">Mandant: Demo 7777</div>
      <div className="ml-auto flex items-center gap-px">
        <svg viewBox="0 0 16 16" className="size-4" aria-hidden="true">
          <path d="M13 12C8 17 0 14 1 8c1-4 5-6 9-5" fill="none" stroke="#4c6c7c" strokeWidth="1.800" />
          <path d="M5 11c6 1 9-3 7-8" fill="none" stroke="#4c6c7c" strokeWidth="1.400" />
          <path d="M8 2c6-2 9 4 5 7-2 2-5 2-7 1 5 0 8-5 2-8z" fill="#a2c617" />
        </svg>
        <span className={clsx('text-[13px] font-semibold text-[#4c6c7c]', segoe)}>informatec</span>
      </div>
      <div className="ml-[6px] h-[18px] w-[221px] border border-[#888] bg-[#e1e1e1] pr-1 text-right">Aktualisiert am: 09.04.2015 16:32:19</div>
    </footer>
  );
}

function StatusBar() {
  return (
    <div className={clsx('flex h-[21px] items-center bg-[#f0f0f0] pt-px pl-[3px] text-[11px] text-black', segoe)}>
      <span>Drücken Sie F1 für Hilfe</span>
      <div className="ml-auto flex h-[18px] items-stretch gap-[2px] pr-[3px]">
        <span className="border border-[#d5d5d5] px-[2px] leading-4">09.04.2015 16:32:19*</span>
        <span className="w-2 border border-[#d5d5d5]" />
        <span className="w-2 border border-[#d5d5d5]" />
        <span className="w-2 border border-[#d5d5d5]" />
        <span className="flex w-5 items-center justify-center border border-[#d5d5d5]"><Led /></span>
        <span className="w-2 border border-[#d5d5d5]" />
        <svg viewBox="0 0 12 12" className="mt-1 ml-1 size-3" aria-hidden="true">
          <path d="M8 1h2v2H8zM8 5h2v2H8zM8 9h2v2H8zM4 5h2v2H4zM4 9h2v2H4zM0 9h2v2H0z" fill="#b8b8b8" />
        </svg>
      </div>
    </div>
  );
}

export default function App() {
  return (
    <div className="flex min-h-screen flex-col border border-[#101820] bg-linear-to-b from-[#9ab5d2] via-[#bad1ea] via-10% to-[#bad1ea] px-[7px] pt-px pb-[7px] shadow-[inset_-1px_-1px_0_#35c6ee,inset_1px_1px_0_#dceaf8]">
      <TitleBar />
      <div className="bg-linear-to-r from-[#9ebdf6] to-[#c4dafa]">
        <MenuBar />
        <Toolbars />
      </div>
      <div className="flex flex-1 flex-col border-t-2 border-l border-[#6b6b6b]">
        <SheetTabs />
        <div className="flex flex-1 flex-col bg-linear-to-b from-white to-[#c0c0c0] pt-[5px] pb-[15px]">
          <div className="flex flex-1 gap-[6px] pr-7 pl-2">
            <Sidebar />
            <Dashboard />
          </div>
          <SheetFooter />
        </div>
      </div>
      <StatusBar />
    </div>
  );
}
